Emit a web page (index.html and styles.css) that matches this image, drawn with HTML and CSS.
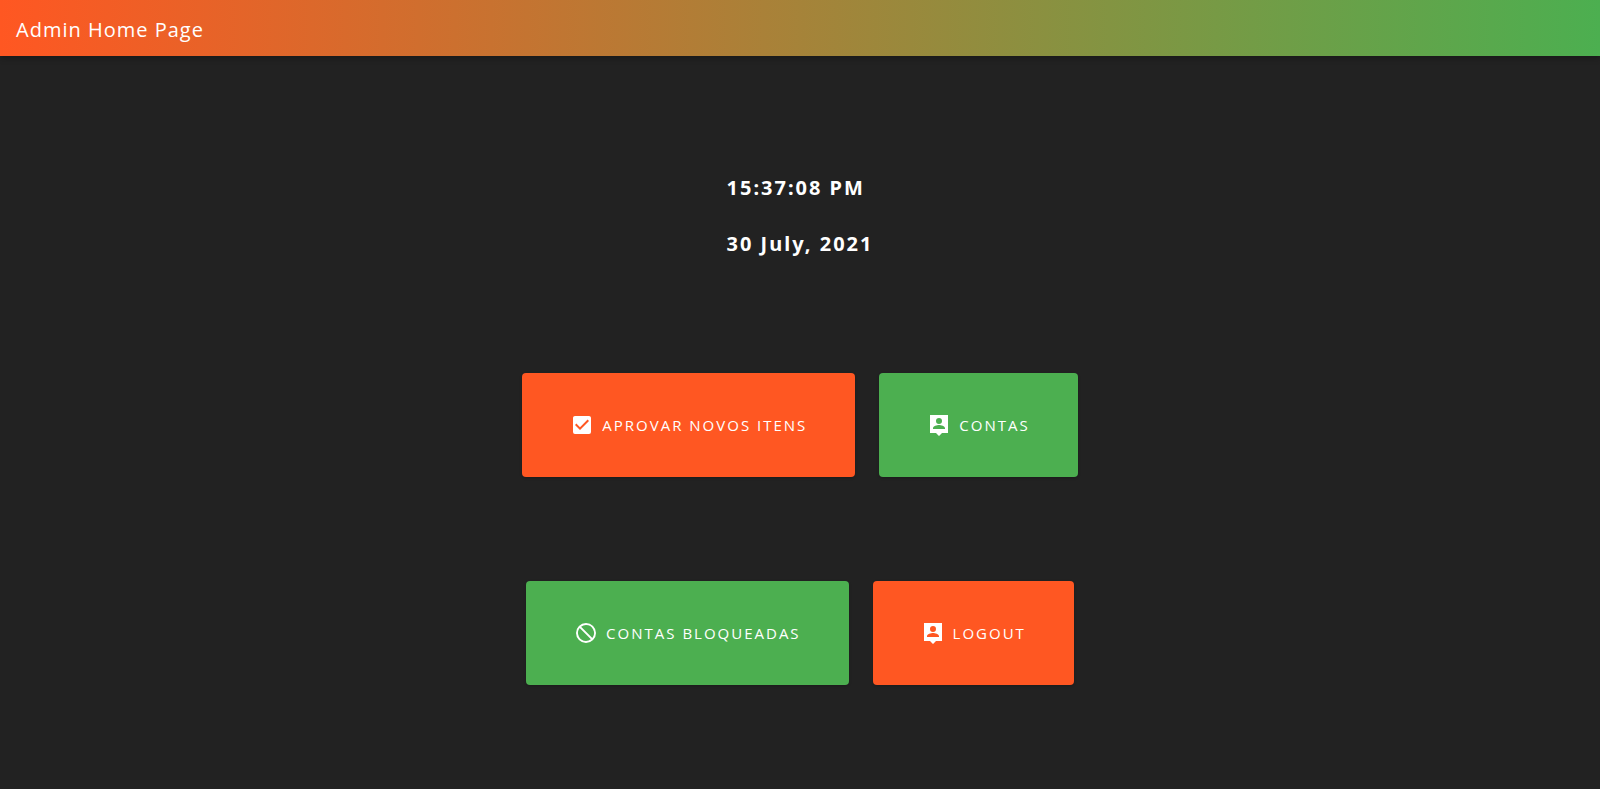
FILE: index.html
```html
<!DOCTYPE html>
<html lang="pt">
<head>
<meta charset="utf-8">
<title>Admin Home Page</title>
<link rel="stylesheet" href="styles.css">
</head>
<body>
<header class="toolbar"><h1 class="toolbar-title">Admin Home Page</h1></header>
<main class="content">
  <div class="clock">
    <p class="clock-line">15:37:08 PM</p>
    <p class="clock-line">30 July, 2021</p>
  </div>
  <div class="actions">
    <button type="button" class="btn btn-orange">
      <svg class="icon" viewBox="0 0 24 24" aria-hidden="true"><path d="M10 17l-5-5 1.41-1.42L10 14.17l7.59-7.59L19 8m0-5H5c-1.11 0-2 .89-2 2v14a2 2 0 0 0 2 2h14a2 2 0 0 0 2-2V5c0-1.11-.9-2-2-2z"/></svg>
      Aprovar novos itens
    </button>
    <button type="button" class="btn btn-green">
      <svg class="icon" viewBox="0 0 24 24" aria-hidden="true"><path fill-rule="evenodd" d="M3 2h18v18h-6l-3 3-3-3H3zM12 5a3 3 0 1 0 0 6 3 3 0 0 0 0-6zM6 16h12v-1c0-2-4-3.100-6-3.100S6 13 6 15z"/></svg>
      Contas
    </button>
  </div>
  <div class="actions">
    <button type="button" class="btn btn-green">
      <svg class="icon" viewBox="0 0 24 24" aria-hidden="true"><path d="M12 2a10 10 0 1 0 0 20 10 10 0 0 0 0-20zm0 2a8 8 0 0 1 6.320 12.900L7.100 5.680A7.900 7.900 0 0 1 12 4zm0 16A8 8 0 0 1 5.680 7.100L16.900 18.320A7.900 7.900 0 0 1 12 20z"/></svg>
      Contas bloqueadas
    </button>
    <button type="button" class="btn btn-orange">
      <svg class="icon" viewBox="0 0 24 24" aria-hidden="true"><path fill-rule="evenodd" d="M3 2h18v18h-6l-3 3-3-3H3zM12 5a3 3 0 1 0 0 6 3 3 0 0 0 0-6zM6 16h12v-1c0-2-4-3.100-6-3.100S6 13 6 15z"/></svg>
      Logout
    </button>
  </div>
</main>
</body>
</html>
```
FILE: styles.css
```css
* { box-sizing: border-box; }
body {
  margin: 0;
  min-height: 100vh;
  background: #222;
  color: #fff;
  font-family: "Open Sans", "Noto Sans", sans-serif;
}
.toolbar {
  display: flex;
  align-items: center;
  height: 56px;
  padding: 4px 16px 0;
  background: linear-gradient(to right, #ff5722, #4caf50);
  box-shadow: 0 2px 6px rgba(0, 0, 0, .3);
}
.toolbar-title {
  margin: 0;
  font-size: 20px;
  line-height: 28px;
  font-weight: 400;
  letter-spacing: 1px;
}
.content {
  display: flex;
  flex-direction: column;
  align-items: center;
  gap: 104px;
  padding-top: 117px;
}
.clock {
  display: grid;
  gap: 26px;
}
.clock-line {
  margin: 0;
  font-family: "Noto Sans", "Open Sans", sans-serif;
  font-size: 20px;
  line-height: 30px;
  font-weight: 700;
  letter-spacing: 2px;
}
.actions {
  display: flex;
  justify-content: center;
  gap: 24px;
}
.clock + .actions { margin-top: 10px; }
.btn {
  display: flex;
  align-items: center;
  gap: 8px;
  height: 104px;
  padding: 0 48px;
  border: 0;
  border-radius: 4px;
  color: #fff;
  font-family: inherit;
  font-size: 15px;
  line-height: 24px;
  font-weight: 500;
  letter-spacing: 2px;
  text-transform: uppercase;
  cursor: pointer;
  box-shadow: 0 1px 3px rgba(0, 0, 0, .2);
}
.btn-orange { background: #ff5722; }
.btn-green { background: #4caf50; }
.icon {
  width: 24px;
  height: 24px;
  fill: currentColor;
}
```
